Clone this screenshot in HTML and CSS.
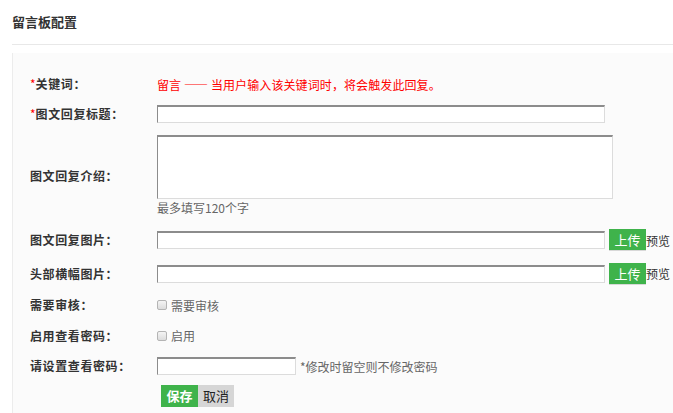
FILE: index.html
```html
<!DOCTYPE html>
<html lang="zh">
<head>
<meta charset="utf-8">
<title>留言板配置</title>
<link rel="stylesheet" href="styles.css">
</head>
<body>
<div class="page">
  <div class="title">留言板配置</div>
  <div class="panel">
    <div class="row r1">
      <div class="label"><span class="req">*</span>关键词：</div>
      <div class="value red">留言 —— 当用户输入该关键词时，将会触发此回复。</div>
    </div>
    <div class="row r2">
      <div class="label"><span class="req">*</span>图文回复标题：</div>
      <div class="value"><input class="txt wide" type="text"></div>
    </div>
    <div class="row r3">
      <div class="label">图文回复介绍：</div>
      <div class="value col">
        <textarea class="area"></textarea>
        <div class="hint">最多填写120个字</div>
      </div>
    </div>
    <div class="row r4">
      <div class="label">图文回复图片：</div>
      <div class="value">
        <input class="txt wide" type="text">
        <span class="upload">上传</span><span class="preview">预览</span>
      </div>
    </div>
    <div class="row r5">
      <div class="label">头部横幅图片：</div>
      <div class="value">
        <input class="txt wide" type="text">
        <span class="upload">上传</span><span class="preview">预览</span>
      </div>
    </div>
    <div class="row r6">
      <div class="label">需要审核：</div>
      <div class="value"><span class="cb"></span><span class="cbtext">需要审核</span></div>
    </div>
    <div class="row r7">
      <div class="label">启用查看密码：</div>
      <div class="value"><span class="cb"></span><span class="cbtext">启用</span></div>
    </div>
    <div class="row r8">
      <div class="label">请设置查看密码：</div>
      <div class="value"><input class="txt short" type="password"><span class="note">*修改时留空则不修改密码</span></div>
    </div>
    <div class="actions">
      <span class="save">保存</span><span class="cancel">取消</span>
    </div>
  </div>
</div>
</body>
</html>
```
FILE: styles.css
```css
html, body {
  margin: 0;
  padding: 0;
  background: #fff;
  font-family: "Noto Sans CJK SC", "Noto Sans", sans-serif;
  font-size: 12px;
  color: #333;
}
.page {
  padding-left: 12px;
  overflow: hidden;
  height: 413px;
}
.title {
  height: 44px;
  line-height: 44px;
  font-size: 13px;
  font-weight: bold;
  color: #333;
  border-bottom: 1px solid #e8e8e8;
}
.panel {
  margin-top: 8px;
  background: #fbfbfb;
  border-left: 1px solid #ececec;
  padding: 16px 0 20px 17px;
}
.row {
  display: flex;
  align-items: center;
}
.r1 { height: 30px; }
.r2 { height: 30px; }
.r3 { height: 94px; }
.r4 { height: 34px; }
.r5 { height: 33px; }
.r6 { height: 30px; }
.r7 { height: 31px; }
.r8 { height: 30px; }
.label {
  width: 127px;
  flex: none;
  font-weight: bold;
  color: #333;
  line-height: 16px;
  letter-spacing: 0.6px;
}
.req { color: #f00; font-weight: normal; letter-spacing: 0; }
.value {
  display: flex;
  align-items: center;
}
.value.col {
  flex-direction: column;
  align-items: flex-start;
}
.red { color: #f00; letter-spacing: 0.1px; }
.txt {
  box-sizing: border-box;
  height: 18px;
  margin: 0;
  padding: 0 2px;
  background: #fff;
  border-style: solid;
  border-width: 2px 1px 1px 1px;
  border-color: #8c8c8c #dcdcdc #dcdcdc #8c8c8c;
  font: inherit;
  outline: none;
}
.wide { width: 448px; }
.short { width: 139px; }
.area {
  box-sizing: border-box;
  width: 456px;
  height: 64px;
  margin: 0;
  padding: 2px;
  background: #fff;
  border-style: solid;
  border-width: 2px 1px 1px 1px;
  border-color: #8c8c8c #dcdcdc #dcdcdc #8c8c8c;
  resize: none;
  font: inherit;
  outline: none;
}
.hint {
  color: #666;
  line-height: 18px;
  height: 18px;
}
.upload {
  box-sizing: border-box;
  margin-left: 4px;
  width: 37px;
  height: 22px;
  line-height: 21px;
  text-align: center;
  background: #3fb34b;
  color: #fff;
  font-size: 13px;
  border-bottom: 1px solid #d8d8d8;
}
.preview {
  color: #333;
  font-size: 12px;
}
.cb {
  box-sizing: border-box;
  width: 10px;
  height: 10px;
  border: 1px solid #b4b4b4;
  border-radius: 2px;
  background: linear-gradient(#f4f4f4, #dcdcdc);
  margin-right: 4px;
}
.cbtext { color: #666; }
.note {
  margin-left: 4px;
  color: #666;
}
.actions {
  display: flex;
  margin-top: 4px;
  padding-left: 131px;
}
.save, .cancel {
  height: 22px;
  line-height: 22px;
  width: 37px;
  text-align: center;
  font-size: 13px;
}
.save {
  background: #3fb34b;
  color: #fff;
  font-weight: bold;
}
.cancel {
  background: #d6d6d6;
  color: #222;
  width: 36px;
}
```
